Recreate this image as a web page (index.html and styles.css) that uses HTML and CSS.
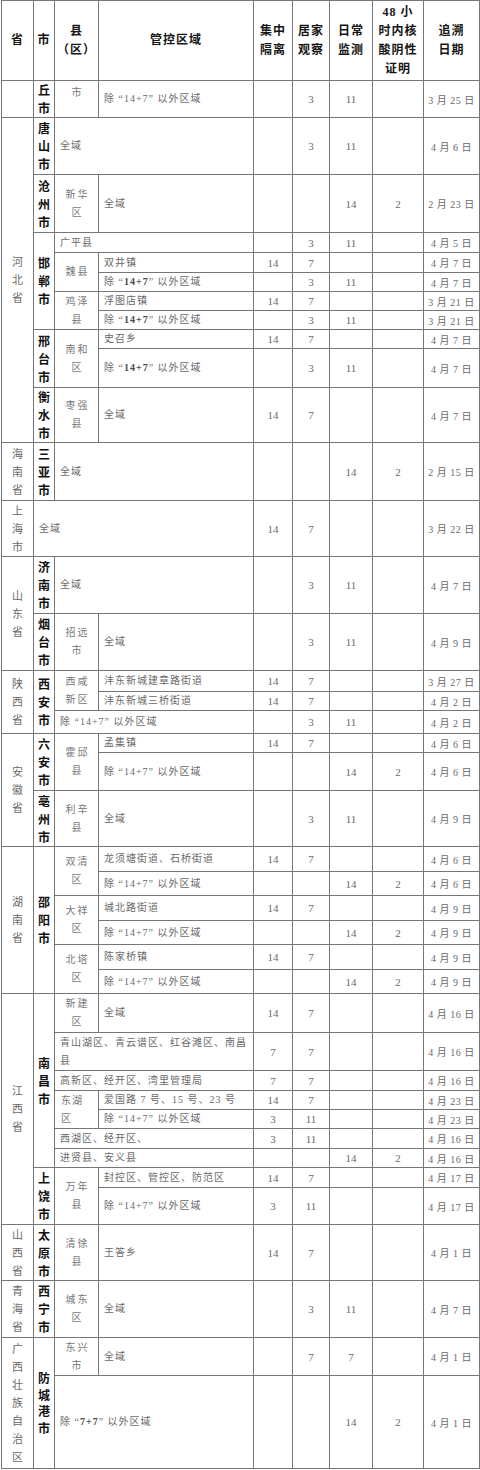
FILE: index.html
```html
<!DOCTYPE html>
<html lang="zh-CN">
<head>
<meta charset="utf-8">
<title>管控区域</title>
<link rel="stylesheet" href="styles.css">
</head>
<body>
<table class="t">
<colgroup>
<col class="w1"><col class="w2"><col class="w3"><col class="w4"><col class="w5"><col class="w6"><col class="w7"><col class="w8"><col class="w9">
</colgroup>
<thead>
<tr class="h80">
<th>省</th><th>市</th><th>县<br>（区）</th><th>管控区域</th><th>集中<br>隔离</th><th>居家<br>观察</th><th>日常<br>监测</th><th>48 小<br>时内核<br>酸阴性<br>证明</th><th>追溯<br>日期</th>
</tr>
</thead>
<tbody>
<tr class="h37">
<td class="p"></td><td class="c"><span class="v">丘市</span></td><td class="x top">市</td><td class="a">除 “14+7” 以外区域</td><td></td><td class="n">3</td><td class="n">11</td><td></td><td class="d">3 月 25 日</td>
</tr>
<tr class="h57">
<td class="p" rowspan="10"><span class="v">河北省</span></td><td class="c"><span class="v">唐山市</span></td><td class="a" colspan="2">全域</td><td></td><td class="n">3</td><td class="n">11</td><td></td><td class="d">4 月 6 日</td>
</tr>
<tr class="h58">
<td class="c"><span class="v">沧州市</span></td><td class="x">新华<br>区</td><td class="a">全域</td><td></td><td></td><td class="n">14</td><td class="n">2</td><td class="d">2 月 23 日</td>
</tr>
<tr class="h20">
<td class="c" rowspan="5"><span class="v">邯郸市</span></td><td class="a" colspan="2">广平县</td><td></td><td class="n">3</td><td class="n">11</td><td></td><td class="d">4 月 5 日</td>
</tr>
<tr class="h20">
<td class="x" rowspan="2">魏县</td><td class="a">双井镇</td><td class="n">14</td><td class="n">7</td><td></td><td></td><td class="d">4 月 7 日</td>
</tr>
<tr class="h19">
<td class="a">除 “<b>14+7</b>” 以外区域</td><td></td><td class="n">3</td><td class="n">11</td><td></td><td class="d">4 月 7 日</td>
</tr>
<tr class="h19">
<td class="x" rowspan="2">鸡泽<br>县</td><td class="a">浮图店镇</td><td class="n">14</td><td class="n">7</td><td></td><td></td><td class="d">3 月 21 日</td>
</tr>
<tr class="h19">
<td class="a">除 “<b>14+7</b>” 以外区域</td><td></td><td class="n">3</td><td class="n">11</td><td></td><td class="d">3 月 21 日</td>
</tr>
<tr class="h18">
<td class="c" rowspan="2"><span class="v">邢台市</span></td><td class="x" rowspan="2">南和<br>区</td><td class="a">史召乡</td><td class="n">14</td><td class="n">7</td><td></td><td></td><td class="d">4 月 7 日</td>
</tr>
<tr class="h39">
<td class="a">除 “<b>14+7</b>” 以外区域</td><td></td><td class="n">3</td><td class="n">11</td><td></td><td class="d">4 月 7 日</td>
</tr>
<tr class="h55">
<td class="c"><span class="v">衡水市</span></td><td class="x">枣强<br>县</td><td class="a">全域</td><td class="n">14</td><td class="n">7</td><td></td><td></td><td class="d">4 月 7 日</td>
</tr>
<tr class="h58">
<td class="p"><span class="v">海南省</span></td><td class="c"><span class="v">三亚市</span></td><td class="a" colspan="2">全域</td><td></td><td></td><td class="n">14</td><td class="n">2</td><td class="d">2 月 15 日</td>
</tr>
<tr class="h56">
<td class="p"><span class="v">上海市</span></td><td class="a" colspan="3">全域</td><td class="n">14</td><td class="n">7</td><td></td><td></td><td class="d">3 月 22 日</td>
</tr>
<tr class="h57">
<td class="p" rowspan="2"><span class="v">山东省</span></td><td class="c"><span class="v">济南市</span></td><td class="a" colspan="2">全域</td><td></td><td class="n">3</td><td class="n">11</td><td></td><td class="d">4 月 7 日</td>
</tr>
<tr class="h57">
<td class="c"><span class="v">烟台市</span></td><td class="x">招远<br>市</td><td class="a">全域</td><td></td><td class="n">3</td><td class="n">11</td><td></td><td class="d">4 月 9 日</td>
</tr>
<tr class="h21">
<td class="p" rowspan="3"><span class="v">陕西省</span></td><td class="c" rowspan="3"><span class="v">西安市</span></td><td class="x" rowspan="2">西咸<br>新区</td><td class="a">沣东新城建章路街道</td><td class="n">14</td><td class="n">7</td><td></td><td></td><td class="d">3 月 27 日</td>
</tr>
<tr class="h19">
<td class="a">沣东新城三桥街道</td><td class="n">14</td><td class="n">7</td><td></td><td></td><td class="d">4 月 2 日</td>
</tr>
<tr class="h23">
<td class="a" colspan="2">除 “14+7” 以外区域</td><td></td><td class="n">3</td><td class="n">11</td><td></td><td class="d">4 月 2 日</td>
</tr>
<tr class="h19">
<td class="p" rowspan="3"><span class="v">安徽省</span></td><td class="c" rowspan="2"><span class="v">六安市</span></td><td class="x" rowspan="2">霍邱<br>县</td><td class="a">孟集镇</td><td class="n">14</td><td class="n">7</td><td></td><td></td><td class="d">4 月 6 日</td>
</tr>
<tr class="h38">
<td class="a">除 “14+7” 以外区域</td><td></td><td></td><td class="n">14</td><td class="n">2</td><td class="d">4 月 6 日</td>
</tr>
<tr class="h56">
<td class="c"><span class="v">亳州市</span></td><td class="x">利辛<br>县</td><td class="a">全域</td><td></td><td class="n">3</td><td class="n">11</td><td></td><td class="d">4 月 9 日</td>
</tr>
<tr class="h25">
<td class="p" rowspan="6"><span class="v">湖南省</span></td><td class="c" rowspan="6"><span class="v">邵阳市</span></td><td class="x" rowspan="2">双清<br>区</td><td class="a">龙须塘街道、石桥街道</td><td class="n">14</td><td class="n">7</td><td></td><td></td><td class="d">4 月 6 日</td>
</tr>
<tr class="h24">
<td class="a">除 “14+7” 以外区域</td><td></td><td></td><td class="n">14</td><td class="n">2</td><td class="d">4 月 6 日</td>
</tr>
<tr class="h25">
<td class="x" rowspan="2">大祥<br>区</td><td class="a">城北路街道</td><td class="n">14</td><td class="n">7</td><td></td><td></td><td class="d">4 月 9 日</td>
</tr>
<tr class="h24">
<td class="a">除 “14+7” 以外区域</td><td></td><td></td><td class="n">14</td><td class="n">2</td><td class="d">4 月 9 日</td>
</tr>
<tr class="h25">
<td class="x" rowspan="2">北塔<br>区</td><td class="a">陈家桥镇</td><td class="n">14</td><td class="n">7</td><td></td><td></td><td class="d">4 月 9 日</td>
</tr>
<tr class="h24">
<td class="a">除 “14+7” 以外区域</td><td></td><td></td><td class="n">14</td><td class="n">2</td><td class="d">4 月 9 日</td>
</tr>
<tr class="h39">
<td class="p" rowspan="9"><span class="v">江西省</span></td><td class="c" rowspan="7"><span class="v">南昌市</span></td><td class="x">新建<br>区</td><td class="a">全域</td><td class="n">14</td><td class="n">7</td><td></td><td></td><td class="d">4 月 16 日</td>
</tr>
<tr class="h38">
<td class="a" colspan="2">青山湖区、青云谱区、红谷滩区、南昌县</td><td class="n">7</td><td class="n">7</td><td></td><td></td><td class="d">4 月 16 日</td>
</tr>
<tr class="h20">
<td class="a" colspan="2">高新区、经开区、湾里管理局</td><td class="n">7</td><td class="n">7</td><td></td><td></td><td class="d">4 月 16 日</td>
</tr>
<tr class="h19">
<td class="x xl" rowspan="2">东湖<br>区</td><td class="a">爱国路 7 号、15 号、23 号</td><td class="n">14</td><td class="n">7</td><td></td><td></td><td class="d">4 月 23 日</td>
</tr>
<tr class="h19">
<td class="a">除 “14+7” 以外区域</td><td class="n">3</td><td class="n">11</td><td></td><td></td><td class="d">4 月 23 日</td>
</tr>
<tr class="h20">
<td class="a" colspan="2">西湖区、经开区、</td><td class="n">3</td><td class="n">11</td><td></td><td></td><td class="d">4 月 16 日</td>
</tr>
<tr class="h19">
<td class="a" colspan="2">进贤县、安义县</td><td></td><td></td><td class="n">14</td><td class="n">2</td><td class="d">4 月 16 日</td>
</tr>
<tr class="h20">
<td class="c" rowspan="2"><span class="v">上饶市</span></td><td class="x" rowspan="2">万年<br>县</td><td class="a">封控区、管控区、防范区</td><td class="n">14</td><td class="n">7</td><td></td><td></td><td class="d">4 月 17 日</td>
</tr>
<tr class="h37">
<td class="a">除 “14+7” 以外区域</td><td class="n">3</td><td class="n">11</td><td></td><td></td><td class="d">4 月 17 日</td>
</tr>
<tr class="h56">
<td class="p"><span class="v">山西省</span></td><td class="c"><span class="v">太原市</span></td><td class="x">清徐<br>县</td><td class="a">王答乡</td><td class="n">14</td><td class="n">7</td><td></td><td></td><td class="d">4 月 1 日</td>
</tr>
<tr class="h57">
<td class="p"><span class="v">青海省</span></td><td class="c"><span class="v">西宁市</span></td><td class="x">城东<br>区</td><td class="a">全域</td><td></td><td class="n">3</td><td class="n">11</td><td></td><td class="d">4 月 7 日</td>
</tr>
<tr class="h38">
<td class="p" rowspan="2"><span class="v">广西壮族自治区</span></td><td class="c" rowspan="2"><span class="v fc">防城港市</span></td><td class="x">东兴<br>市</td><td class="a">全域</td><td></td><td class="n">7</td><td class="n">7</td><td></td><td class="d">4 月 1 日</td>
</tr>
<tr class="h93">
<td class="a" colspan="2">除 “<b>7+7</b>” 以外区域</td><td></td><td></td><td class="n">14</td><td class="n">2</td><td class="d">4 月 1 日</td>
</tr>
</tbody>
</table>
</body>
</html>
```
FILE: styles.css
```css
html, body {
  margin: 0;
  padding: 0;
  background: #ffffff;
}

.t {
  border-collapse: collapse;
  table-layout: fixed;
  width: 479px;
  margin-left: 1px;
  font-family: "Liberation Serif", "Noto Sans CJK SC", serif;
  color: #6a6a6a;
  font-size: 10px;
}

.w1 { width: 32px; }
.w2 { width: 21px; }
.w3 { width: 44px; }
.w4 { width: 155px; }
.w5 { width: 39px; }
.w6 { width: 37px; }
.w7 { width: 43px; }
.w8 { width: 51px; }
.w9 { width: 56px; }

.t th,
.t td {
  border: 1px solid #767676;
  padding: 0;
  vertical-align: middle;
  overflow: hidden;
}

.t th {
  font-family: "Liberation Serif", "Noto Sans CJK SC", serif;
  font-weight: 700;
  color: #151515;
  font-size: 12px;
  line-height: 19px;
  letter-spacing: 1px;
  text-align: center;
}

.h18 { height: 18px; }
.h19 { height: 19px; }
.h20 { height: 20px; }
.h21 { height: 21px; }
.h23 { height: 23px; }
.h24 { height: 24px; }
.h25 { height: 25px; }
.h37 { height: 37px; }
.h38 { height: 38px; }
.h39 { height: 39px; }
.h55 { height: 55px; }
.h56 { height: 56px; }
.h57 { height: 57px; }
.h58 { height: 58px; }
.h80 { height: 80px; }
.h93 { height: 93px; }

.t .v {
  display: block;
  width: 1em;
  margin: 0 auto;
  word-break: break-all;
}

.t .p {
  text-align: center;
  font-size: 11px;
  line-height: 18px;
  color: #6a6a6a;
}

.t .c {
  text-align: center;
  font-family: "Noto Sans CJK SC", sans-serif;
  font-weight: 700;
  font-size: 12px;
  line-height: 18px;
  color: #111111;
}

.t .fc {
  line-height: 16.5px;
}

.t .x {
  text-align: center;
  font-size: 10px;
  line-height: 18px;
  letter-spacing: 2px;
  padding-left: 2px;
  color: #777777;
}

.t .xl {
  text-align: left;
  padding-left: 6px;
  letter-spacing: 1px;
}

.t .top {
  vertical-align: top;
  padding-top: 5px;
  line-height: 14px;
}

.t .a {
  text-align: left;
  padding-left: 5px;
  font-size: 10px;
  line-height: 18px;
  letter-spacing: 1px;
  color: #6a6a6a;
}

.t .a b {
  font-weight: 700;
  color: #4a4a4a;
}

.t .n {
  text-align: center;
  font-size: 11px;
  color: #6a6a6a;
}

.t .d {
  text-align: center;
  font-size: 10px;
  letter-spacing: 0.5px;
  white-space: nowrap;
  color: #6a6a6a;
}
```
